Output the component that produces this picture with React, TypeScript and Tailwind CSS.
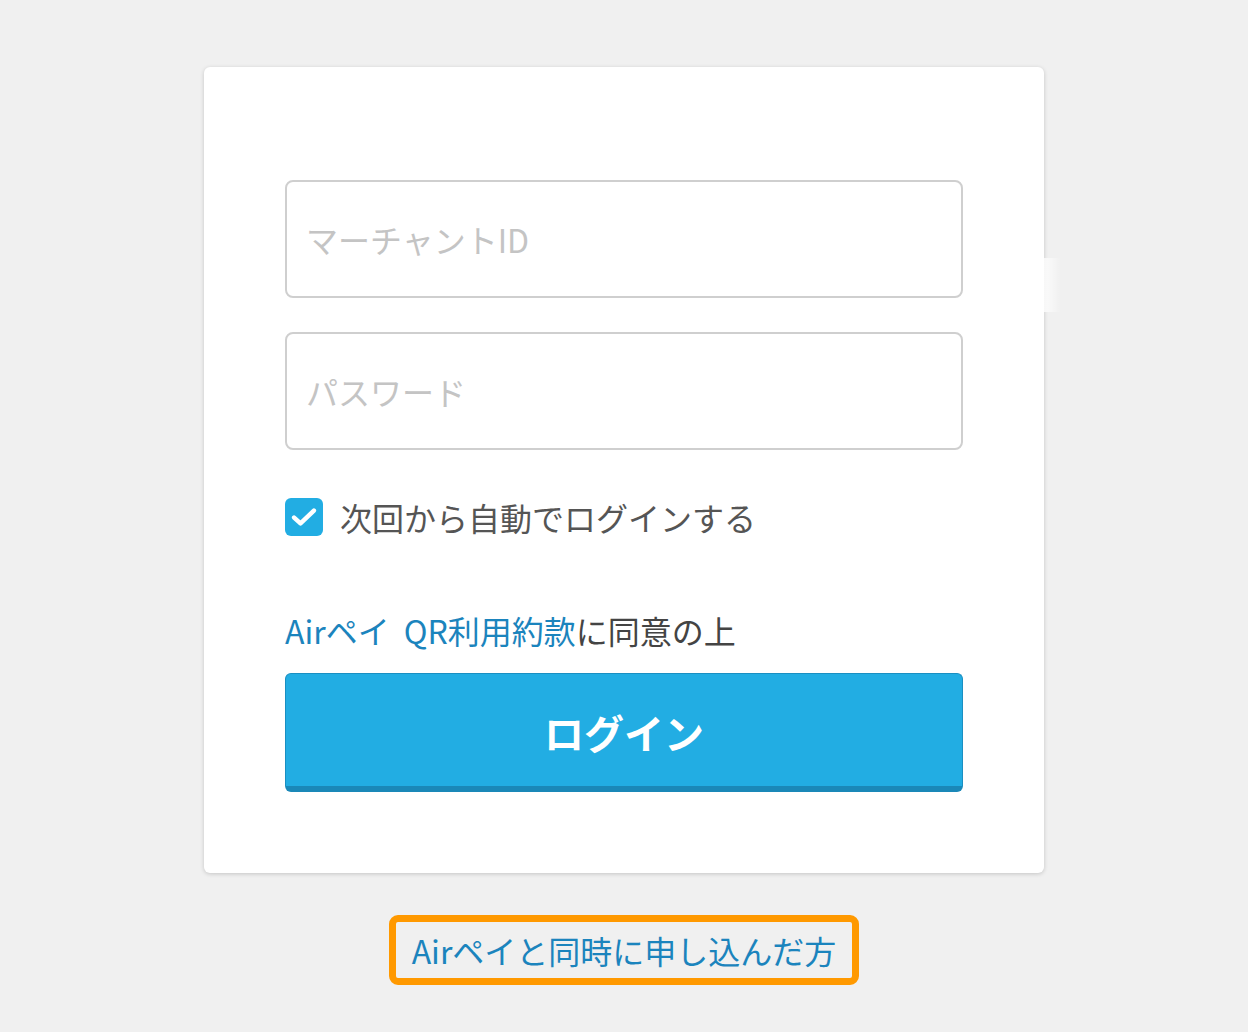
import React from 'react';

const font = { fontFamily: '"Noto Sans CJK JP", "Liberation Sans", sans-serif' };

const inputClass =
  'block w-full h-[118px] rounded-[8px] border-2 border-[#cfcfcf] bg-white px-[19px] text-[32px] text-[#333] placeholder:text-[#c4c4c4] outline-none';

export default function App() {
  return (
    <div className="min-h-[1032px] w-full bg-[#f0f0f0] pt-[67px]" style={font}>
      <div className="relative mx-auto w-[840px] rounded-[6px] bg-white px-[81px] pt-[113px] pb-[81px] shadow-[0_1px_4px_rgba(0,0,0,0.18)]">
        {/* odd faded strip on the right edge */}
        <div className="absolute left-[823px] top-[191px] h-[54px] w-[34px] bg-gradient-to-r from-white via-white/80 to-transparent" />

        <input className={inputClass} placeholder="マーチャントID" />
        <input className={`${inputClass} mt-[34px]`} placeholder="パスワード" type="password" />

        <label className="mt-[48px] flex items-center gap-[17px]">
          <span className="flex h-[38px] w-[38px] shrink-0 items-center justify-center rounded-[6px] bg-[#22ade3]">
            <svg width="28" height="28" viewBox="0 0 24 24" fill="none">
              <path d="M3.5 12.5l5.5 5L20.5 6.5" stroke="white" strokeWidth="3.8" strokeLinecap="round" strokeLinejoin="round" />
            </svg>
          </span>
          <span className="text-[32px] leading-none text-[#555]">次回から自動でログインする</span>
        </label>

        <p className="mt-[78px] text-[32px] leading-none text-[#444]">
          <a className="text-[#1b84bd]">
            Airペイ<span className="ml-[14px]">QR利用約款</span>
          </a>
          に同意の上
        </p>

        <button className="mt-[27px] box-border flex h-[119px] w-full items-center justify-center rounded-[6px] border border-[#1a8fc2] border-b-[6px] border-b-[#1a88b8] bg-[#22ade3] pt-[4px] text-[40px] font-bold text-white">
          ログイン
        </button>
      </div>

      <div className="mt-[42px] flex justify-center">
        <a className="flex h-[70px] items-center rounded-[9px] border-[7px] border-[#ff9900] px-[16px] text-[32px] leading-none text-[#1b84bd]">
          Airペイと同時に申し込んだ方
        </a>
      </div>
    </div>
  );
}
